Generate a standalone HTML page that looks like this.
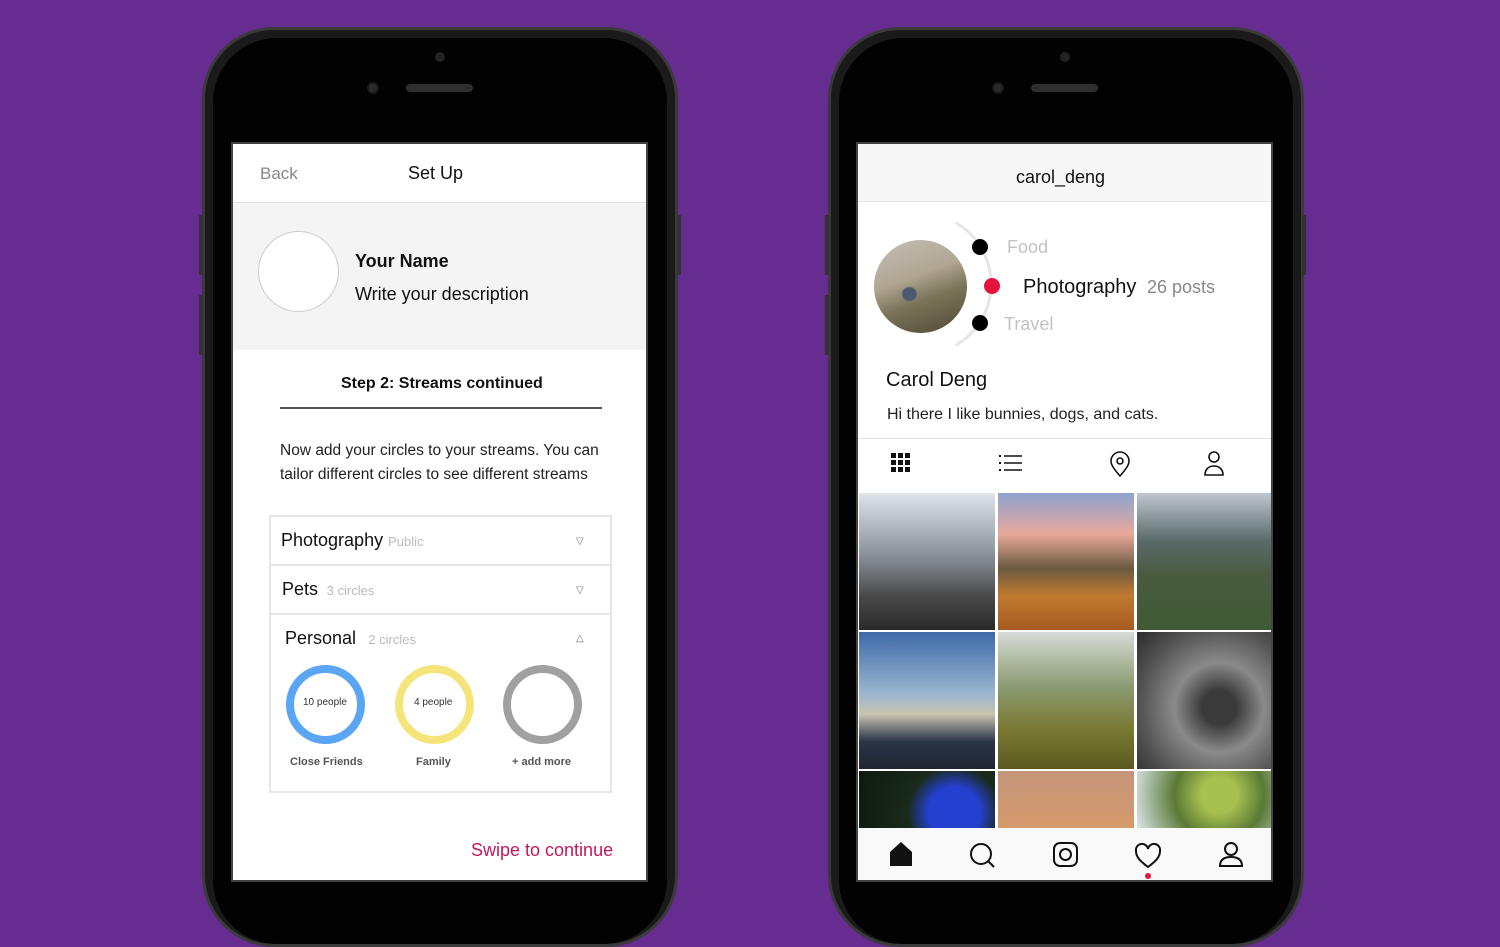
<!DOCTYPE html><html><head><style>
*{margin:0;padding:0;box-sizing:border-box}
body{width:1500px;height:900px;background:#662c90;position:relative;overflow:hidden;font-family:"Liberation Sans",sans-serif}
.a{position:absolute}
.phone{position:absolute;top:27px;width:476px;height:920px;border-radius:72px;background:#1a1a1a;border:3px solid #3a3a3a}
.inner{position:absolute;left:8px;top:8px;right:8px;bottom:0;border-radius:64px;background:#020202}
.screen{position:absolute;top:142px;width:417px;height:740px;background:#fff;overflow:hidden;border:2px solid #444}
.t{position:absolute;white-space:nowrap}
.btn{position:absolute;width:4px;background:#333}
</style></head><body>
<!-- left phone -->
<div class="phone" style="left:202px"><div class="inner"></div></div>
<div class="btn" style="left:199px;top:215px;height:60px"></div>
<div class="btn" style="left:199px;top:295px;height:60px"></div>
<div class="btn" style="left:677px;top:215px;height:60px"></div>
<div class="a" style="left:435px;top:52px;width:10px;height:10px;border-radius:50%;background:#222"></div>
<div class="a" style="left:367px;top:82px;width:12px;height:12px;border-radius:50%;background:#2a2a2a;border:2px solid #1a1a1a"></div>
<div class="a" style="left:406px;top:84px;width:67px;height:8px;border-radius:4px;background:#2e2e2e"></div>
<div class="screen" style="left:231px">
 <div class="t" style="left:27px;top:20px;font-size:17px;color:#888">Back</div>
 <div class="t" style="left:175px;top:19px;font-size:18px;color:#111">Set Up</div>
 <div class="a" style="left:0;top:58px;width:417px;height:148px;background:#f4f4f4;border-top:1px solid #e4e4e4"></div>
 <div class="a" style="left:25px;top:87px;width:81px;height:81px;border-radius:50%;background:#fff;border:1px solid #ccc"></div>
 <div class="t" style="left:122px;top:107px;font-size:18px;font-weight:bold;color:#111">Your Name</div>
 <div class="t" style="left:122px;top:140px;font-size:18px;color:#111">Write your description</div>
 <div class="t" style="left:108px;top:231px;font-size:16px;font-weight:bold;color:#111">Step 2: Streams continued</div>
 <div class="a" style="left:47px;top:263px;width:322px;height:2px;background:#555"></div>
 <div class="t" style="left:47px;top:295px;font-size:15.5px;color:#222;line-height:24px">Now add your circles to your streams. You can<br>tailor different circles to see different streams</div>
 <div class="a" style="left:36px;top:371px;width:343px;height:278px;border:2px solid #e6e6e6"></div>
 <div class="a" style="left:36px;top:420px;width:343px;height:2px;background:#e6e6e6"></div>
 <div class="a" style="left:36px;top:469px;width:343px;height:2px;background:#e6e6e6"></div>
 <div class="t" style="left:48px;top:386px;font-size:18px;color:#111">Photography <span style="font-size:13px;color:#bbb">Public</span></div>
 <div class="t" style="left:49px;top:435px;font-size:18px;color:#111">Pets <span style="font-size:13px;color:#bbb">&nbsp;3 circles</span></div>
 <div class="t" style="left:52px;top:484px;font-size:18px;color:#111">Personal <span style="font-size:13px;color:#bbb">&nbsp;&nbsp;2 circles</span></div>
 <div class="t" style="left:343px;top:392px;font-size:10px;color:#777">▽</div>
 <div class="t" style="left:343px;top:441px;font-size:10px;color:#777">▽</div>
 <div class="t" style="left:343px;top:489px;font-size:10px;color:#777">△</div>
 <div class="a" style="left:53px;top:521px;width:79px;height:79px;border-radius:50%;border:8px solid #5ba5f5"></div>
 <div class="a" style="left:162px;top:521px;width:79px;height:79px;border-radius:50%;border:8px solid #f5e47a"></div>
 <div class="a" style="left:270px;top:521px;width:79px;height:79px;border-radius:50%;border:8px solid #a0a0a0"></div>
 <div class="t" style="left:70px;top:553px;font-size:10px;color:#333">10 people</div>
 <div class="t" style="left:181px;top:553px;font-size:10px;color:#333">4 people</div>
 <div class="t" style="left:57px;top:612px;font-size:11px;font-weight:bold;color:#555">Close Friends</div>
 <div class="t" style="left:183px;top:612px;font-size:11px;font-weight:bold;color:#555">Family</div>
 <div class="t" style="left:279px;top:612px;font-size:11px;font-weight:bold;color:#555">+ add more</div>
 <div class="t" style="left:238px;top:696px;font-size:18px;color:#c2185b">Swipe to continue</div>
</div>
<!-- right phone -->
<div class="phone" style="left:828px"><div class="inner"></div></div>
<div class="btn" style="left:825px;top:215px;height:60px"></div>
<div class="btn" style="left:825px;top:295px;height:60px"></div>
<div class="btn" style="left:1302px;top:215px;height:60px"></div>
<div class="a" style="left:1060px;top:52px;width:10px;height:10px;border-radius:50%;background:#222"></div>
<div class="a" style="left:992px;top:82px;width:12px;height:12px;border-radius:50%;background:#2a2a2a;border:2px solid #1a1a1a"></div>
<div class="a" style="left:1031px;top:84px;width:67px;height:8px;border-radius:4px;background:#2e2e2e"></div>
<div class="screen" style="left:856px">
 <div class="a" style="left:0;top:0;width:417px;height:58px;background:#f7f7f7;border-bottom:1px solid #e2e2e2"></div>
 <div class="t" style="left:158px;top:23px;font-size:18px;color:#111">carol_deng</div>
 <svg class="a" style="left:0;top:60px" width="417" height="180"><path d="M97.5 18.5 A71 71 0 0 1 97.5 141.5" fill="none" stroke="#e6e6e6" stroke-width="3"/></svg>
 <div class="a" style="left:16px;top:96px;width:93px;height:93px;border-radius:50%;background:radial-gradient(ellipse at 38% 58%,#4a5a70 0 8%,transparent 10%),linear-gradient(160deg,#c4bfb5 0%,#b0a693 40%,#7a7358 62%,#4f4a38 100%)"></div>
 <div class="a" style="left:114px;top:95px;width:16px;height:16px;border-radius:50%;background:#000"></div>
 <div class="a" style="left:126px;top:134px;width:16px;height:16px;border-radius:50%;background:#e4143c"></div>
 <div class="a" style="left:114px;top:171px;width:16px;height:16px;border-radius:50%;background:#000"></div>
 <div class="t" style="left:149px;top:93px;font-size:18px;color:#c2c2c2">Food</div>
 <div class="t" style="left:165px;top:132px;font-size:20px;color:#111">Photography <span style="font-size:18px;color:#888">&nbsp;26 posts</span></div>
 <div class="t" style="left:146px;top:170px;font-size:18px;color:#c2c2c2">Travel</div>
 <div class="t" style="left:28px;top:225px;font-size:20px;color:#111">Carol Deng</div>
 <div class="t" style="left:29px;top:262px;font-size:16px;color:#222">Hi there I like bunnies, dogs, and cats.</div>
 <div class="a" style="left:0;top:294px;width:417px;height:1px;background:#e2e2e2"></div>
 <svg class="a" style="left:0;top:298px" width="417" height="48">
  <g fill="#111"><rect x="33" y="11" width="5" height="5"/><rect x="40" y="11" width="5" height="5"/><rect x="47" y="11" width="5" height="5"/><rect x="33" y="18" width="5" height="5"/><rect x="40" y="18" width="5" height="5"/><rect x="47" y="18" width="5" height="5"/><rect x="33" y="25" width="5" height="5"/><rect x="40" y="25" width="5" height="5"/><rect x="47" y="25" width="5" height="5"/>
  <rect x="141" y="13" width="2" height="2"/><rect x="141" y="20" width="2" height="2"/><rect x="141" y="27" width="2" height="2"/></g>
  <g stroke="#111" stroke-width="1.6" fill="none"><path d="M146 14h18M146 21h18M146 28h18"/>
  <path d="M262 34c-6-7-9-11-9-15a9 9 0 0118 0c0 4-3 8-9 15z"/><circle cx="262" cy="19" r="3"/>
  <circle cx="356" cy="15" r="5"/><path d="M347 33c0-6 4-9 9-9s9 3 9 9z"/></g>
 </svg>
 <div class="a" style="left:0;top:348px;width:417px;height:340px;background:#fff"></div>
 <div class="a" style="left:1px;top:349px;width:136px;height:137px;background:linear-gradient(180deg,#dfe5ea 0%,#8a929a 45%,#4a4a4a 75%,#2a2a2a 100%)"></div>
 <div class="a" style="left:140px;top:349px;width:136px;height:137px;background:linear-gradient(180deg,#8ea3d0 0%,#e8a89a 30%,#6a5a40 55%,#c07a30 75%,#a65a20 100%)"></div>
 <div class="a" style="left:279px;top:349px;width:137px;height:137px;background:linear-gradient(180deg,#bfc6d0 0%,#5a6a6a 35%,#4a5a40 60%,#3f5a35 100%)"></div>
 <div class="a" style="left:1px;top:488px;width:136px;height:137px;background:linear-gradient(180deg,#3e6aa8 0%,#9ab5cf 45%,#c9c3b0 60%,#2a3548 80%,#1e2430 100%)"></div>
 <div class="a" style="left:140px;top:488px;width:136px;height:137px;background:linear-gradient(180deg,#d8dcd8 0%,#8a9a70 40%,#7a7a35 70%,#5a5a20 100%)"></div>
 <div class="a" style="left:279px;top:488px;width:137px;height:137px;background:radial-gradient(circle at 60% 55%,#3a3a3a 0 15%,#8a8a8a 40%,#555 70%,#2a2a2a 100%)"></div>
 <div class="a" style="left:1px;top:627px;width:136px;height:60px;background:radial-gradient(circle at 70% 70%,#2440d0 0 25%,#1a2a1a 45%,#0d1a10 100%)"></div>
 <div class="a" style="left:140px;top:627px;width:136px;height:60px;background:linear-gradient(180deg,#c4957a,#d69a6a)"></div>
 <div class="a" style="left:279px;top:627px;width:137px;height:60px;background:radial-gradient(circle at 60% 40%,#a8c050 0 20%,#5a7a35 50%,#dfe8ee 100%)"></div>
 <div class="a" style="left:0;top:684px;width:417px;height:56px;background:#f9f9f9"></div>
 <svg class="a" style="left:0;top:684px" width="417" height="56">
  <path d="M32 38V24L43 14L54 24V38z" fill="#111"/>
  <g stroke="#111" stroke-width="2" fill="none">
   <circle cx="123" cy="26" r="10"/><path d="M130 33l6 6"/>
   <rect x="196" y="15" width="23" height="23" rx="6"/><circle cx="207.5" cy="26.5" r="5.5"/>
   <path d="M290 39c-8-6-12-10-12-16a6 6 0 0112-2 6 6 0 0112 2c0 6-4 10-12 16z"/>
   <circle cx="373" cy="21" r="6"/><path d="M362 38c0-7 5-9 11-9s11 2 11 9z"/>
  </g>
  <circle cx="290" cy="48" r="3" fill="#e4143c"/>
 </svg>
</div>
</body></html>
